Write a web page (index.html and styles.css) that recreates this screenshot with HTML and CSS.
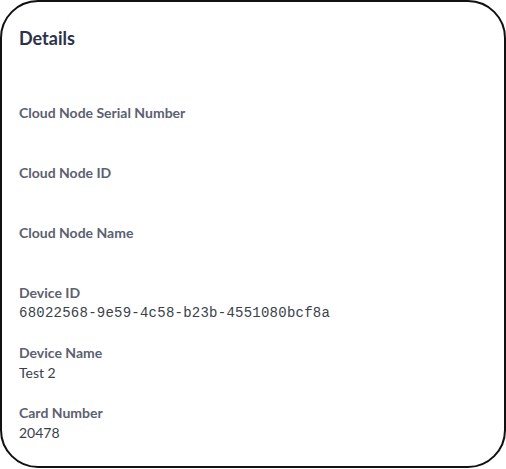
FILE: index.html
```html
<!doctype html>
<html lang="en">
    <head>
        <meta charset="UTF-8" />
        <meta name="viewport" content="width=device-width, initial-scale=1.0" />
        <title>Details</title>
        <link rel="stylesheet" href="styles.css">
    </head>
    <body>
        <div class="card">
            <h2 class="card-title">Details</h2>

            <dl class="fields">
                <div class="field">
                    <dt>Cloud Node Serial Number</dt>
                    <dd></dd>
                </div>
                <div class="field">
                    <dt>Cloud Node ID</dt>
                    <dd></dd>
                </div>
                <div class="field">
                    <dt>Cloud Node Name</dt>
                    <dd></dd>
                </div>
                <div class="field">
                    <dt>Device ID</dt>
                    <dd class="mono">68022568-9e59-4c58-b23b-4551080bcf8a</dd>
                </div>
                <div class="field">
                    <dt>Device Name</dt>
                    <dd>Test 2</dd>
                </div>
                <div class="field">
                    <dt>Card Number</dt>
                    <dd>20478</dd>
                </div>
            </dl>
        </div>
    </body>
</html>
```

FILE: styles.css
```css
body {
    margin: 0;
    font-family: Lato, "Noto Sans", sans-serif;
    background: #fff;
}
.card {
    box-sizing: border-box;
    width: 506px;
    height: 468px;
    border: 2px solid #111;
    border-radius: 38px;
    padding: 24px 17px;
}
.card-title {
    margin: 0;
    font-size: 18px;
    line-height: 24px;
    font-weight: 700;
    color: #2b3349;
}
.fields {
    margin: 53px 0 0;
}
.field {
    margin-bottom: 20px;
}
.field dt {
    font-size: 14px;
    line-height: 20px;
    font-weight: 700;
    color: #5b6170;
}
.field dd {
    margin: 0;
    min-height: 20px;
    font-size: 14px;
    line-height: 20px;
    color: #3a3f4b;
}
.mono {
    font-family: "Liberation Mono", monospace;
    letter-spacing: 0.24px;
    color: #2f333d;
}
```
